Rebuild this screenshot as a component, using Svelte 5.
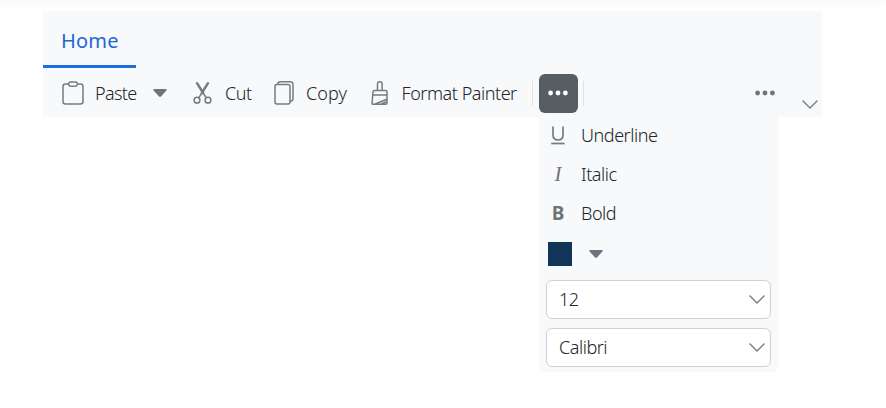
<script>
  const fonts = [
    { value: '12', cls: 'size' },
    { value: 'Calibri', cls: 'family' }
  ];
</script>

<div class="page">
  <div class="ribbon">
    <div class="tabs">
      <div class="tab"><span class="home">Home</span></div>
    </div>
    <div class="toolbar">
      <div class="item paste">
        <svg width="22" height="24" viewBox="0 0 22 24">
          <rect x="1" y="3" width="20" height="20" rx="2.5" />
          <rect x="6.8" y="1" width="8.4" height="4.2" rx="1.4" class="clip" />
        </svg>
        <span class="label">Paste</span>
        <svg class="caret" width="14" height="8" viewBox="0 0 14 8"><path d="M1.2 0h11.6q1.5 .4 .6 1.5L8 7.4q-1 .9-2 0L.6 1.5Q-.3.4 1.2 0Z" /></svg>
      </div>
      <div class="item cut">
        <svg width="20" height="24" viewBox="0 0 20 24">
          <circle cx="4" cy="19.2" r="2.9" /><circle cx="15" cy="19.2" r="2.9" />
          <path class="blade" d="M4 2.2 10.2 12M15 2.2 8.8 12" />
          <path d="M9.5 11 13.3 16.8M9.5 11 5.7 16.8" />
        </svg>
        <span class="label">Cut</span>
      </div>
      <div class="item copy">
        <svg width="20" height="24" viewBox="0 0 20 24">
          <rect x="1" y="3.5" width="15" height="19.5" rx="2" />
          <path d="M3.5 3.2Q4 .8 6 .8h10q3 0 3 3v13.5q0 3-2.6 3" />
        </svg>
        <span class="label">Copy</span>
      </div>
      <div class="item painter">
        <svg width="18" height="24" viewBox="0 0 18 24">
          <path d="M6.5 9.4V3q0-2.2 2.3-2.2T11.1 3v6.4M3.5 9.5h11q1.5 0 1.5 1.4V22q0 1.2-1.2 1.2H2.1Q.9 23.2 1.1 22L2 10.9q.2-1.4 1.5-1.4ZM1.8 14.1H16M4.2 23l11.5-4.8M10.2 23l5.3-2.3" />
        </svg>
        <span class="label">Format Painter</span>
      </div>
      <i class="sep"></i>
      <button class="more" aria-label="More">
        <svg width="20" height="6" viewBox="0 0 20 6"><circle cx="2.6" cy="3" r="2.4" /><circle cx="10" cy="3" r="2.4" /><circle cx="17.4" cy="3" r="2.4" /></svg>
      </button>
      <i class="sep"></i>
      <svg class="dots" width="20" height="6" viewBox="0 0 20 6"><circle cx="2.6" cy="3" r="2.4" /><circle cx="10" cy="3" r="2.4" /><circle cx="17.4" cy="3" r="2.4" /></svg>
      <svg class="collapse" width="16" height="9" viewBox="0 0 16 9"><path d="M1 1l7 7 7-7" /></svg>
    </div>
    <div class="popup">
      <div class="row"><span class="glyph"><svg width="16" height="20" viewBox="0 0 16 20"><path class="u" d="M3 .5v8.6q0 4.9 5 4.9t5-4.9V.5" /><path class="u" d="M1.2 17.5h13.4" /></svg></span><span class="label underline">Underline</span></div>
      <div class="row"><span class="glyph italic">I</span><span class="label it">Italic</span></div>
      <div class="row"><span class="glyph bold">B</span><span class="label bo">Bold</span></div>
      <div class="color">
        <span class="swatch"></span>
        <svg class="caret" width="14" height="8" viewBox="0 0 14 8"><path d="M1.2 0h11.6q1.5 .4 .6 1.5L8 7.4q-1 .9-2 0L.6 1.5Q-.3.4 1.2 0Z" /></svg>
      </div>
      {#each fonts as font}
        <div class="select">
          <span class="label {font.cls}">{font.value}</span>
          <svg width="16" height="9" viewBox="0 0 16 9"><path d="M1 1l7 7 7-7" /></svg>
        </div>
      {/each}
    </div>
  </div>
</div>

<style>
  :global(body) { background: #fff; }
  .page {
    box-sizing: border-box; width: 886px; height: 408px; padding: 11px 64px 0 43px;
    background: linear-gradient(#fbfbfb, #fdfdfd 7px, #fff 8px);
    font-family: "Noto Sans", "Open Sans", sans-serif; font-size: 18px; color: #212529;
  }
  .ribbon { position: relative; z-index: 0; height: 106px; background: #f8f9fb; }
  .tabs { display: flex; height: 57px; }
  .tab { box-sizing: border-box; width: 93px; padding-left: 18px; border-bottom: 3px solid #1a6ee0; color: #1f66d8; font-size: 20px; line-height: 59px; font-weight: 370; letter-spacing: 0.2px; }
  .toolbar { display: flex; align-items: center; height: 49px; padding: 0 4px 0 19px; box-sizing: border-box; }
  .item { display: flex; align-items: center; height: 39px; }
  .label { white-space: nowrap; line-height: 26px; font-weight: 360; letter-spacing: -0.46px; }
  svg { flex: none; display: block; fill: none; stroke: #747b82; stroke-width: 1.5; stroke-linecap: round; stroke-linejoin: round; }
  .clip { fill: #f8f9fb; }
  .blade { stroke-width: 2.4; }
  .caret { fill: #6c757d; stroke: none; }
  .paste { width: 131px; }
  .paste .label { width: 58px; margin-left: 11px; letter-spacing: -0.65px; }
  .cut { width: 81px; }
  .cut .label { margin-left: 12px; }
  .copy { width: 97px; }
  .copy .label { margin-left: 12px; letter-spacing: 0.1px; }
  .painter { width: 161px; }
  .painter .label { margin-left: 12.5px; }
  .sep { flex: none; width: 1px; height: 25px; background: #dee2e6; margin-top: 2px; }
  .more { flex: none; display: flex; align-items: center; justify-content: center; width: 39px; height: 39px; margin: 2px 5px 0 6px; border: 0; border-radius: 6px; padding: 0 1px 1px 0; background: #565e64; }
  .more svg { fill: #fff; stroke: none; }
  .dots { fill: #6c757d; stroke: none; margin-left: auto; }
  .collapse { margin: 24px 0 0 27px; stroke-width: 1.4; }
  .popup { position: absolute; left: 496px; top: 105px; width: 239px; height: 256px; box-sizing: border-box; padding: 0 7px; background: #f8f9fb; border-radius: 0 0 5px 5px; z-index: -1; }
  .popup .label { padding-bottom: 2px; }
  .row { display: flex; align-items: center; height: 39px; }
  .glyph { width: 24px; margin-right: 11px; display: flex; justify-content: center; color: #6c757d; line-height: 26px; }
  .u { stroke-width: 1.7; stroke-linecap: butt; }
  .italic { font: italic 21px/26px "Liberation Serif", serif; padding-bottom: 1px; }
  .bold { font: bold 19px/26px "Noto Sans", sans-serif; padding-bottom: 2px; }
  .color { display: flex; align-items: center; height: 42px; padding-left: 2px; }
  .swatch { width: 24px; height: 24px; background: #113459; margin-right: 17px; }
  .select { box-sizing: border-box; width: 225px; height: 39px; margin: 5px 0 9px; display: flex; align-items: center; justify-content: space-between; padding: 0 5px 0 12px; border: 1px solid #ced2d8; border-radius: 6px; background: #fff; }
  .select + .select { margin-top: 0; }
  .select svg { stroke-width: 1.4; }
</style>
